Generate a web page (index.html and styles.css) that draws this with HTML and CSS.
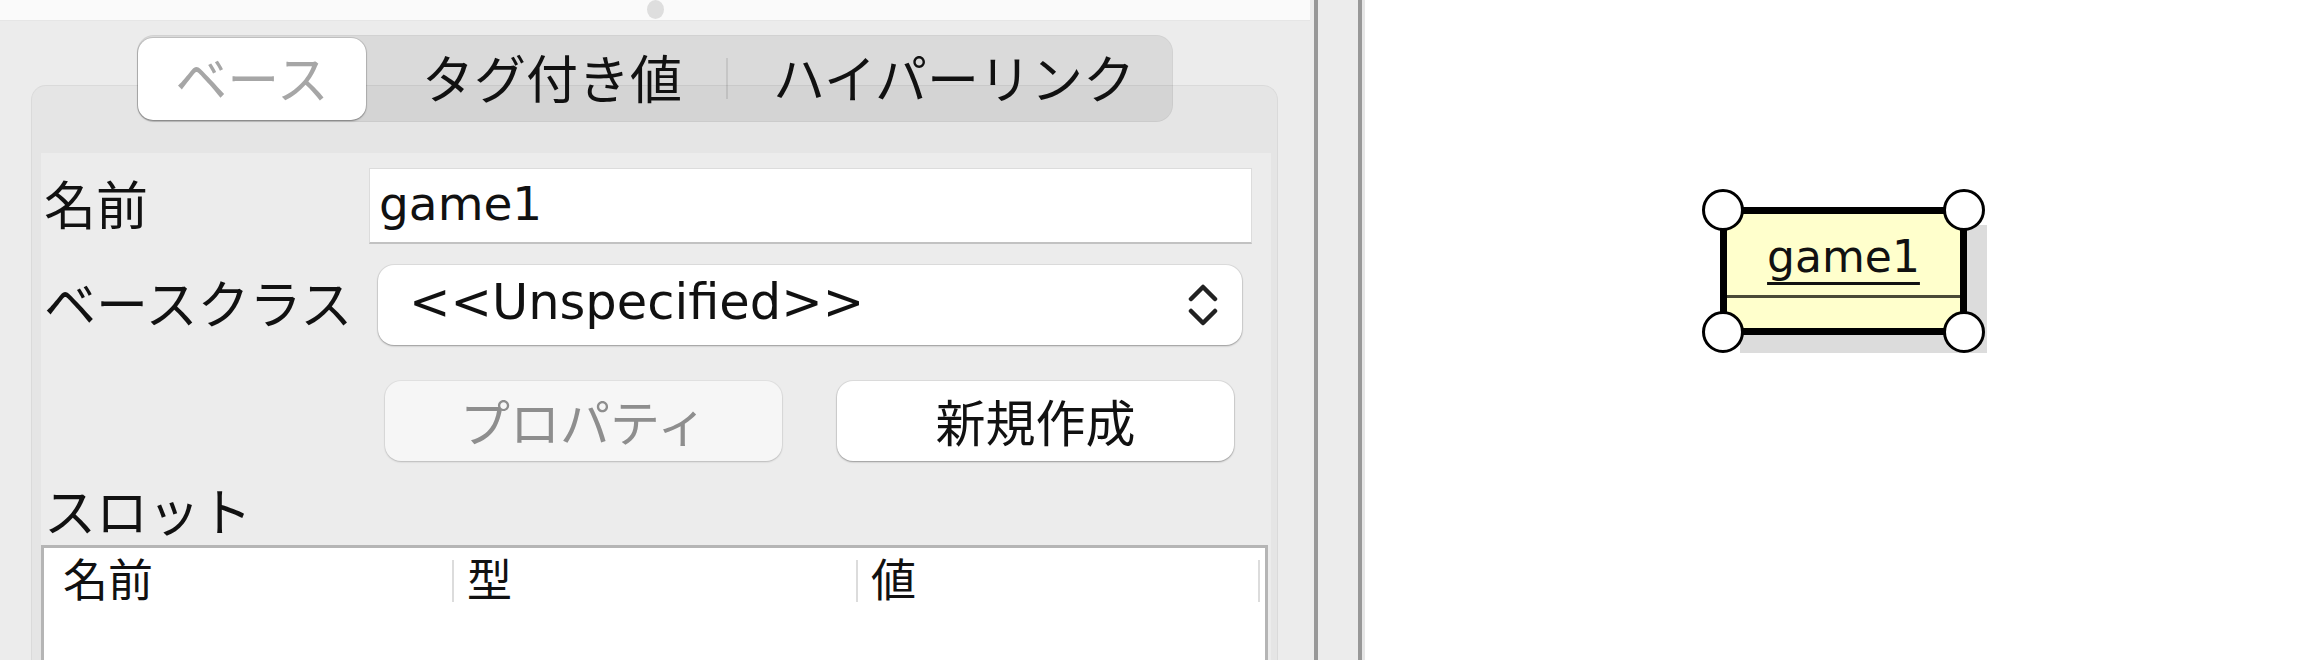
FILE: index.html
```html
<!DOCTYPE html>
<html lang="ja">
<head>
<meta charset="utf-8">
<link rel="stylesheet" href="styles.css">
</head>
<body>
<div class="app">
  <div class="left">
    <div class="topstrip"><span class="handle-dot"></span></div>
    <div class="tabs-area">
      <div class="segmented">
        <div class="seg seg-1 selected">ベース</div>
        <div class="seg seg-2">タグ付き値</div>
        <div class="seg-sep"></div>
        <div class="seg seg-3">ハイパーリンク</div>
      </div>
      <div class="groupbox">
        <div class="inner">
          <div class="row row-name">
            <div class="label">名前</div>
            <div class="textfield">game1</div>
          </div>
          <div class="row row-base">
            <div class="label">ベースクラス</div>
            <div class="combo">
              <span class="combo-text">&lt;&lt;Unspecified&gt;&gt;</span>
              <svg class="chevrons" width="30" height="44" viewBox="0 0 30 44">
                <path d="M3 16 L15 4 L27 16" fill="none" stroke="#222" stroke-width="4.5" stroke-linecap="round" stroke-linejoin="round"/>
                <path d="M3 28 L15 40 L27 28" fill="none" stroke="#222" stroke-width="4.5" stroke-linecap="round" stroke-linejoin="round"/>
              </svg>
            </div>
          </div>
          <div class="row row-buttons">
            <div class="btn disabled">プロパティ</div>
            <div class="btn">新規作成</div>
          </div>
          <div class="slot-label">スロット</div>
          <div class="table">
            <div class="thead">
              <div class="th th-1">名前</div>
              <div class="th th-2">型</div>
              <div class="th th-3">値</div>
            </div>
          </div>
        </div>
      </div>
    </div>
  </div>
  <div class="splitter">
    <div class="split-line"></div>
    <div class="split-gap"></div>
    <div class="split-line"></div>
    <div class="split-edge"></div>
  </div>
  <div class="canvas">
    <div class="node">
      <div class="node-name"><span class="node-text">game1</span></div>
      <div class="node-slots"></div>
      <span class="hdl hdl-tl"></span>
      <span class="hdl hdl-tr"></span>
      <span class="hdl hdl-bl"></span>
      <span class="hdl hdl-br"></span>
    </div>
  </div>
</div>
</body>
</html>
```
FILE: styles.css
```css
* { box-sizing: border-box; }
html, body { margin: 0; padding: 0; }
body {
  width: 2315px;
  height: 660px;
  overflow: hidden;
  background: #ffffff;
  font-family: "Noto Sans CJK JP", "DejaVu Sans", sans-serif;
  color: #111;
}
.app {
  display: flex;
  height: 660px;
}
.left {
  width: 1314px;
  flex: none;
  background: #ececec;
  display: flex;
  flex-direction: column;
  overflow: hidden;
}
.topstrip {
  height: 21px;
  margin-right: 4px;
  background: #fafafa;
  border-bottom: 1px solid #e6e6e6;
  display: flex;
  justify-content: center;
  align-items: flex-end;
  padding-bottom: 1px;
}
.handle-dot {
  width: 17px;
  height: 19px;
  border-radius: 50%;
  background: #dedede;
}
.tabs-area {
  display: flex;
  flex-direction: column;
  padding: 14px 36px 0 31px;
  flex: 1;
}
.segmented {
  position: relative;
  z-index: 2;
  align-self: flex-start;
  margin-left: 106px;
  width: 1036px;
  height: 87px;
  border-radius: 17px;
  background: rgba(0, 0, 0, 0.075);
  border: 1px solid rgba(0, 0, 0, 0.04);
  display: flex;
  align-items: center;
  font-size: 52px;
  line-height: 1;
}
.seg {
  display: flex;
  align-items: center;
  justify-content: center;
  height: 100%;
  padding-bottom: 3px;
  color: #111;
}
.seg-1 { width: 228px; }
.seg-2 { width: 360px; padding-left: 12px; }
.seg-3 { flex: 1; padding-left: 8px; }
.seg.selected {
  height: 82px;
  background: #ffffff;
  border-radius: 15px;
  color: #a6a6a6;
  box-shadow: 0 1px 2px rgba(0,0,0,0.35), 0 0 0 1px rgba(0,0,0,0.10);
}
.seg-sep {
  width: 2px;
  height: 41px;
  background: rgba(0, 0, 0, 0.09);
}
.groupbox {
  margin-top: -37px;
  flex: 1;
  background: #e5e5e5;
  border: 1px solid #dadada;
  border-bottom: none;
  border-radius: 15px 15px 0 0;
  padding: 67px 6px 0 9px;
  display: flex;
  flex-direction: column;
}
.inner {
  flex: 1;
  background: #ececec;
  padding: 0 3px 0 3px;
  display: flex;
  flex-direction: column;
  font-size: 52px;
  line-height: 1.2;
}
.row {
  display: flex;
  align-items: center;
}
.label {
  color: #111;
  padding-bottom: 6px;
}
.row-name {
  margin-top: 15px;
}
.row-name .label { width: 325px; }
.textfield {
  width: 883px;
  height: 76px;
  background: #ffffff;
  border: 1px solid #dcdcdc;
  border-bottom: 2px solid #c2c2c2;
  font-family: "DejaVu Sans", sans-serif;
  font-size: 47px;
  line-height: 1;
  padding: 0 0 4px 9px;
  display: flex;
  align-items: center;
}
.row-base {
  margin-top: 21px;
}
.row-base .label { width: 334px; }
.combo {
  width: 864px;
  height: 80px;
  background: #ffffff;
  border-radius: 16px;
  box-shadow: 0 1px 2px rgba(0,0,0,0.32), 0 0 0 1px rgba(0,0,0,0.06);
  display: flex;
  align-items: center;
  justify-content: space-between;
  padding: 0 24px 0 31px;
}
.combo-text {
  font-family: "DejaVu Sans", sans-serif;
  font-size: 49.5px;
  line-height: 1;
  padding-bottom: 4px;
}
.chevrons { display: block; }
.row-buttons {
  margin-top: 36px;
  padding-left: 341px;
  gap: 55px;
  font-size: 50px;
}
.btn {
  width: 397px;
  height: 80px;
  border-radius: 16px;
  background: #ffffff;
  box-shadow: 0 1px 2px rgba(0,0,0,0.32), 0 0 0 1px rgba(0,0,0,0.06);
  display: flex;
  align-items: center;
  justify-content: center;
  padding-bottom: 3px;
  line-height: 1;
  color: #111;
}
.btn.disabled {
  background: #f6f6f6;
  color: #8e8e8e;
  box-shadow: 0 1px 2px rgba(0,0,0,0.18), 0 0 0 1px rgba(0,0,0,0.04);
}
.slot-label {
  margin-top: 26px;
  height: 58px;
  line-height: 46px;
}
.table {
  flex: 1;
  margin-left: -3px;
  background: #ffffff;
  border: 3px solid #b5b5b5;
  border-bottom: none;
}
.thead {
  display: flex;
  padding-top: 12px;
  font-size: 45px;
  line-height: 36px;
}
.th {
  height: 42px;
  display: flex;
  align-items: flex-start;
}
.th-1 { width: 408px; padding-left: 19px; }
.th-2, .th-3 {
  width: 404px;
  padding-left: 13px;
  border-left: 2px solid #dcdcdc;
}
.th-3 {
  border-right: 2px solid #dcdcdc;
}
.splitter {
  display: flex;
  flex: none;
}
.split-line {
  width: 4px;
  background: #989898;
}
.split-gap {
  width: 40px;
  background: #ececec;
}
.split-edge {
  width: 3px;
  background: #e6e6e6;
}
.canvas {
  flex: 1;
  position: relative;
  background: #ffffff;
}
.node {
  position: absolute;
  left: 355px;
  top: 207px;
  width: 247px;
  height: 128px;
  background: #ffffcc;
  border: 7px solid #000;
  box-shadow: 20px 18px 0 #dcdcdc;
  display: flex;
  flex-direction: column;
}
.node-name {
  height: 84px;
  border-bottom: 3px solid #4a4a36;
  display: flex;
  justify-content: center;
  align-items: center;
  padding-top: 5px;
}
.node-text {
  font-family: "DejaVu Sans", sans-serif;
  font-size: 44px;
  line-height: 1;
  color: #111;
  text-decoration: underline;
  text-decoration-thickness: 3px;
  text-underline-offset: 10px;
}
.node-slots { flex: 1; }
.hdl {
  position: absolute;
  width: 42px;
  height: 42px;
  border-radius: 50%;
  background: #fff;
  border: 3px solid #000;
}
.hdl-tl { left: -25px; top: -25px; }
.hdl-tr { right: -25px; top: -25px; }
.hdl-bl { left: -25px; bottom: -25px; }
.hdl-br { right: -25px; bottom: -25px; }
```
